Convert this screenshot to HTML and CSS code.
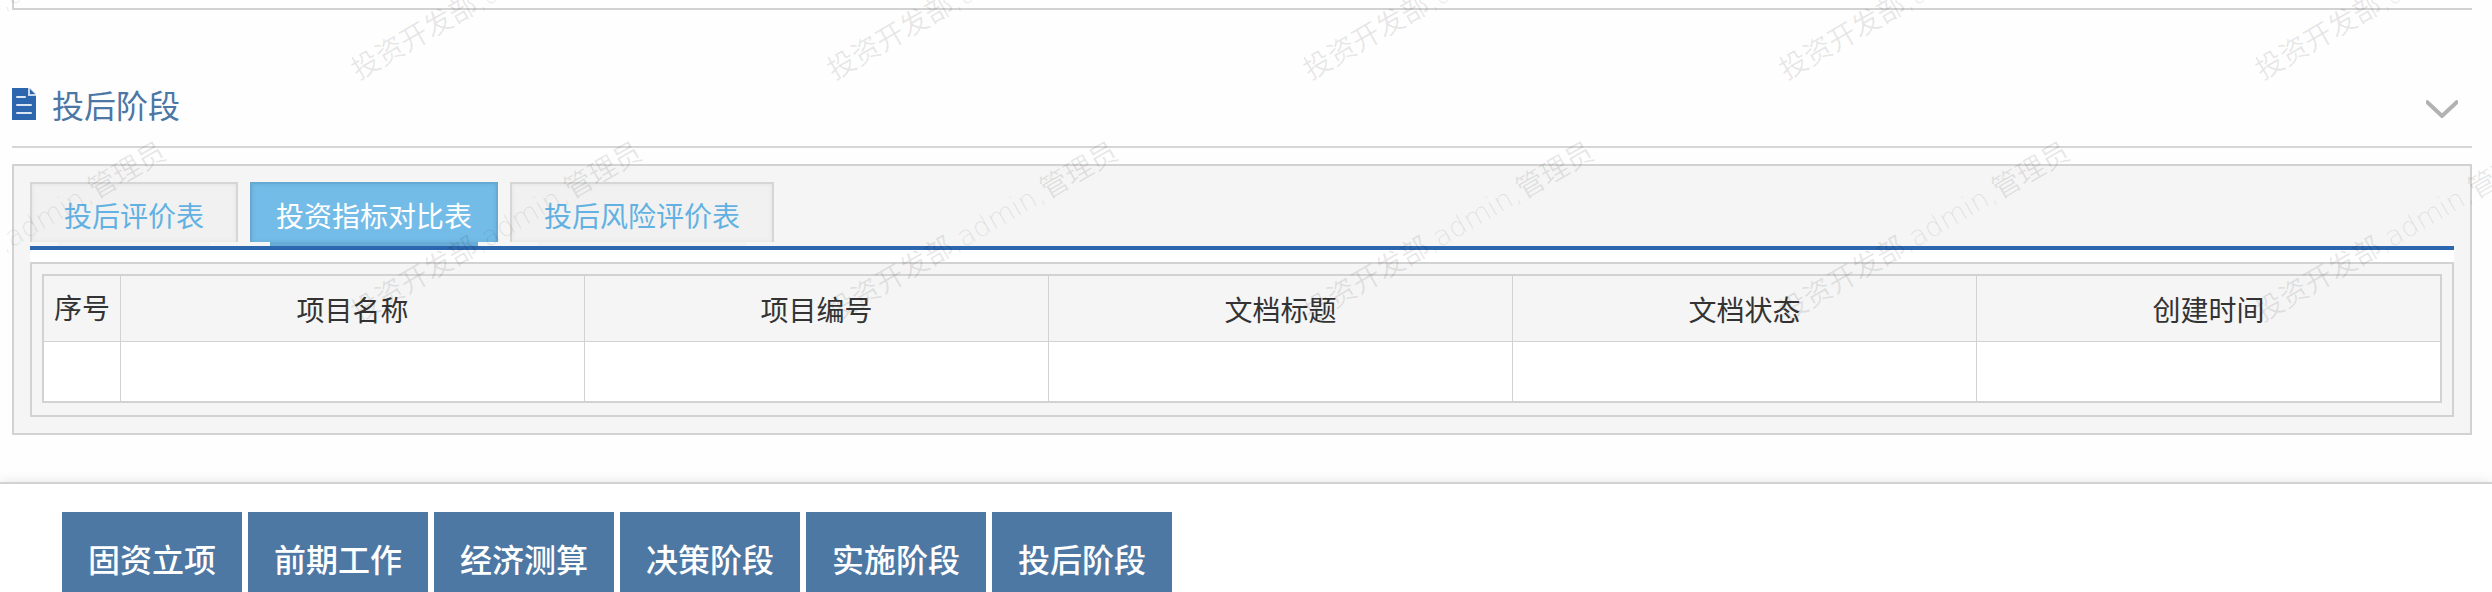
FILE: index.html
```html
<!DOCTYPE html>
<html lang="zh-CN">
<head>
    <meta charset="UTF-8">
    <meta name="viewport" content="width=device-width, initial-scale=1.0">
    <title>投后阶段</title>
    <link rel="stylesheet" href="styles.css">
</head>
<body>
    <main class="content">
        <div class="prev-panel"></div>

        <section>
            <header class="section-header">
                <svg class="doc-icon" width="24" height="32" viewBox="0 0 24 32" aria-hidden="true">
                    <path d="M0 0h16v8h8v24H0z" fill="#2c66ae"/>
                    <path d="M16 0h2l6 6v2h-8z" fill="#c9d8eb"/>
                    <path d="M18 1v5h5z" fill="#2c66ae"/>
                    <path d="M5 9h8M5 17h14M5 25h14" stroke="#dce6f3" stroke-width="2" stroke-linecap="round"/>
                </svg>
                <h2>投后阶段</h2>
                <button type="button" class="toggle" aria-label="收起">
                    <svg width="32" height="18" viewBox="0 0 32 18">
                        <path d="M0 1l16 15L32 1" fill="none" stroke="#b2b2b2" stroke-width="4"/>
                    </svg>
                </button>
            </header>

            <div class="panel">
                <nav class="tabs">
                    <button type="button" class="tab">投后评价表</button>
                    <button type="button" class="tab active">投资指标对比表</button>
                    <button type="button" class="tab">投后风险评价表</button>
                </nav>
                <div class="table-box">
                    <table>
                        <thead>
                            <tr>
                                <th class="index">序号</th>
                                <th>项目名称</th>
                                <th>项目编号</th>
                                <th>文档标题</th>
                                <th>文档状态</th>
                                <th>创建时间</th>
                            </tr>
                        </thead>
                        <tbody>
                            <tr>
                                <td></td>
                                <td></td>
                                <td></td>
                                <td></td>
                                <td></td>
                                <td></td>
                            </tr>
                        </tbody>
                    </table>
                </div>
            </div>
        </section>

        <!-- watermark -->
        <div class="watermark" aria-hidden="true">
            <span>投资开发部,admin,管理员</span>
            <span>投资开发部,admin,管理员</span>
            <span>投资开发部,admin,管理员</span>
            <span>投资开发部,admin,管理员</span>
            <span>投资开发部,admin,管理员</span>
            <span>投资开发部,admin,管理员</span>
            <span>投资开发部,admin,管理员</span>
            <span>投资开发部,admin,管理员</span>
            <span>投资开发部,admin,管理员</span>
            <span>投资开发部,admin,管理员</span>
            <span>投资开发部,admin,管理员</span>
            <span>投资开发部,admin,管理员</span>
        </div>
    </main>

    <footer class="stage-bar">
        <button type="button">固资立项</button>
        <button type="button">前期工作</button>
        <button type="button">经济测算</button>
        <button type="button">决策阶段</button>
        <button type="button">实施阶段</button>
        <button type="button">投后阶段</button>
    </footer>
</body>
</html>
```
FILE: styles.css
```css
* { box-sizing: border-box; }
body { margin: 0; background: #fff; color: #333; font-family: "Noto Sans CJK SC", sans-serif; font-size: 28px; }
button { margin: 0; padding: 0; border: none; background: none; font: inherit; cursor: pointer; }
svg { display: block; }

.content { position: relative; overflow: hidden; padding: 0 20px 47px 12px; background: #fefefe; }
.prev-panel { height: 10px; border-left: 2px solid #d2d2d2; border-bottom: 2px solid #d2d2d2; }

.section-header { display: flex; align-items: center; gap: 16px; margin-top: 50px; height: 88px; padding-top: 2px; border-bottom: 2px solid #d6d6d6; }
.section-header h2 { flex: 1; margin: 0; font-size: 32px; line-height: 48px; font-weight: 400; color: #4c77a5; }
.toggle { padding: 10px 14px 0; }

.panel { margin-top: 16px; padding: 16px; border: 2px solid #d2d2d2; background: #f5f5f5; }

.tabs { display: flex; gap: 12px; padding-bottom: 4px; border-bottom: 4px solid #2c66ae; }
.tab { position: relative; height: 60px; padding: 4px 32px 0; border: 2px solid #d6d6d6; border-bottom: none; background: #f1f1f1; box-shadow: inset 0 0 4px #e2e2e2; color: #62b1e2; line-height: 54px; }
.tab::after { content: ""; position: absolute; left: 26px; right: 26px; bottom: -4px; height: 4px; background: #f1f1f1; }
.tab.active { padding: 4px 24px 0; border-color: #66aad3; background: #74bce8; box-shadow: inset 0 0 4px #66aad3; color: #fff; }
.tab.active::after { left: 18px; right: 18px; background: #67acd6; }

.table-box { padding: 10px 10px 12px; border: 2px solid #d2d2d2; box-shadow: 0 -12px #fff; margin-top: 12px; }
table { width: 100%; border: 2px solid #d2d2d2; border-spacing: 0; table-layout: fixed; }
th, td { padding: 0; border-left: 1px solid #d2d2d2; }
th:first-child, td:first-child { border-left: none; }
th { height: 66px; border-bottom: 1px solid #d2d2d2; font-weight: 400; line-height: 42px; }
th.index { padding-bottom: 4px; }
td { height: 59px; background: #fff; }
.index { width: 76px; }

.watermark { position: absolute; top: 0; left: -112px; display: grid; grid-template-columns: repeat(6, 476px); grid-auto-rows: 242px; pointer-events: none; color: rgba(0, 0, 0, 0.09); font-family: "DejaVu Sans Light", "DejaVu Sans", "Noto Sans CJK SC", sans-serif; font-weight: 400; white-space: nowrap; }
.watermark span { height: 40px; margin-top: 50px; line-height: 40px; transform: rotate(-30deg); transform-origin: left bottom; }

.stage-bar { position: relative; display: flex; gap: 6px; height: 110px; padding: 28px 62px 0; border-top: 2px solid #d2d2d2; background: #fff; box-shadow: 0 0 12px rgba(0, 0, 0, 0.1); }
.stage-bar button { width: 180px; padding-top: 12px; background: #4e78a4; color: #fff; font-size: 32px; font-weight: 500; }
```
